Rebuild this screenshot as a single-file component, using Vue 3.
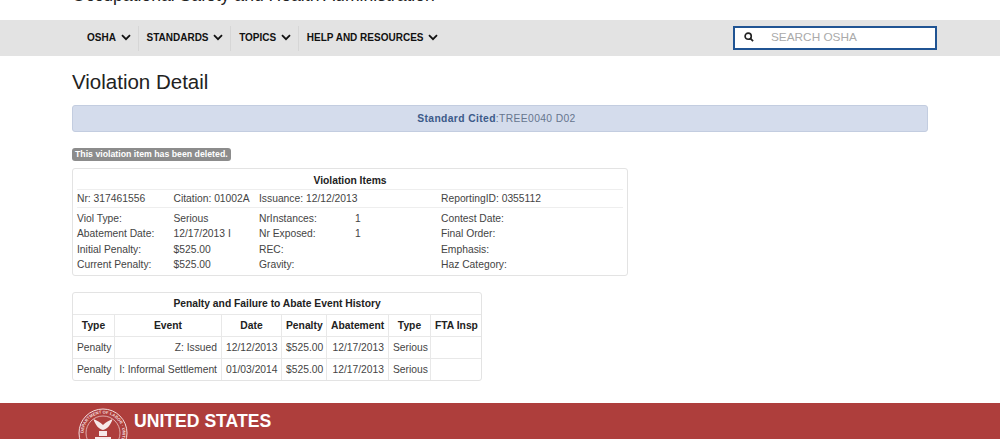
<script setup>
const navItems = ['OSHA', 'STANDARDS', 'TOPICS', 'HELP AND RESOURCES']
const rows = [
  ['Viol Type:', 'Serious', 'NrInstances:', '1', 'Contest Date:'],
  ['Abatement Date:', '12/17/2013 I', 'Nr Exposed:', '1', 'Final Order:'],
  ['Initial Penalty:', '$525.00', 'REC:', '', 'Emphasis:'],
  ['Current Penalty:', '$525.00', 'Gravity:', '', 'Haz Category:'],
]
const history = [
  ['Penalty', 'Z: Issued', '12/12/2013', '$525.00', '12/17/2013', 'Serious', ''],
  ['Penalty', 'I: Informal Settlement', '01/03/2014', '$525.00', '12/17/2013', 'Serious', ''],
]
const colClasses = ['c1', 'c2', 'c3', 'c4', 'c5', 'c6', 'c7']
</script>

<template>
  <div class="page">
    <div class="agency"><span>Occupational Safety and Health Administration</span></div>
    <nav class="nav">
      <ul class="menu">
        <li v-for="item in navItems" :key="item" class="menu-item">
          {{ item }}
          <svg class="chev" width="10" height="7" viewBox="0 0 10 7"><path d="M1 1.2 5 5.200l4-4" fill="none" stroke="#111" stroke-width="1.8"/></svg>
        </li>
      </ul>
      <div class="search">
        <svg class="glass" width="10" height="10" viewBox="0 0 11 11"><circle cx="4.6" cy="4.6" r="3.4" fill="none" stroke="#222" stroke-width="1.8"/><path d="M7.2 7.2 10 10" stroke="#222" stroke-width="2"/></svg>
        <span class="placeholder">SEARCH OSHA</span>
      </div>
    </nav>
    <main class="main">
      <h1 class="title">Violation Detail</h1>
      <div class="cited"><b>Standard Cited</b>:TREE0040 D02</div>
      <span class="label">This violation item has been deleted.</span>
      <section class="items">
        <div class="items-head">Violation Items</div>
        <div class="grid top">
          <span>Nr: 317461556</span><span>Citation: 01002A</span><span class="wide">Issuance: 12/12/2013</span><span>ReportingID: 0355112</span>
        </div>
        <div class="grid body">
          <template v-for="(row, i) in rows" :key="i">
            <span v-for="(cell, j) in row" :key="j">{{ cell }}</span>
          </template>
        </div>
      </section>
      <table class="history">
        <colgroup><col v-for="c in colClasses" :key="c" :class="c"></colgroup>
        <thead>
          <tr class="caption-row"><th colspan="7">Penalty and Failure to Abate Event History</th></tr>
          <tr><th>Type</th><th>Event</th><th>Date</th><th>Penalty</th><th>Abatement</th><th>Type</th><th>FTA Insp</th></tr>
        </thead>
        <tbody>
          <tr v-for="(row, i) in history" :key="i">
            <td v-for="(cell, j) in row" :key="j" :class="{ right: j === 1 || j === 4 }">{{ cell }}</td>
          </tr>
        </tbody>
      </table>
    </main>
    <footer class="footer">
      <svg class="seal" width="50" height="50" viewBox="0 0 50 50">
        <defs><path id="ring" d="M5.5 25a19.5 19.5 0 1 1 39 0a19.5 19.5 0 1 1 -39 0"/></defs>
        <circle cx="25" cy="25" r="24" fill="none" stroke="#f3dddd" stroke-width="1"/>
        <circle cx="25" cy="25" r="17" fill="none" stroke="#f3dddd" stroke-width=".7"/>
        <text class="ring-text" fill="#f3dddd"><textPath href="#ring">DEPARTMENT OF LABOR · UNITED STATES OF AMERICA</textPath></text>
        <path d="M25 22C21 21 17 17 15.5 11C19 12.5 22 14 25 17C28 14 31 12.5 34.500 11C33 17 29 21 25 22Z" fill="#f6e8e8"/>
        <path d="M21 23h8v5h-8z" fill="#f6e8e8"/>
        <path d="M17 29h16v3H17zM20 33h10v3H20z" fill="#f6e8e8"/>
      </svg>
      <span class="country">UNITED STATES</span>
    </footer>
  </div>
</template>

<style scoped>
.page {
  width: 1000px;
  height: 439px;
  overflow: hidden;
  font-family: "Liberation Sans", Arial, sans-serif;
  color: #444;
  font-size: 10.3px;
  background: #fff;
}
.agency {
  height: 20px;
  padding-left: 72px;
  font-size: 17.6px;
  color: #222;
  line-height: 20px;
  overflow: hidden;
}
.agency span { display: block; margin-top: -15px; }
.nav {
  height: 36px;
  background: #e3e3e3;
  display: flex;
  justify-content: space-between;
  align-items: center;
  padding: 0 63px 0 79px;
}
.menu { display: flex; list-style: none; margin: 0; padding: 0; }
.menu-item {
  display: flex;
  align-items: center;
  gap: 4.6px;
  height: 25px;
  box-sizing: border-box;
  padding: 0 7px 2px 8px;
  font-size: 10px;
  font-weight: 700;
  color: #111;
  border-right: 1px solid #d6d6d6;
}
.chev { margin-top: 1px; }
.menu-item:last-child { border-right: 0; }
.search {
  width: 204px;
  height: 24px;
  box-sizing: border-box;
  border: 2px solid #205493;
  background: #fff;
  display: flex;
  align-items: center;
  padding: 0 0 2px 9px;
  gap: 17px;
}
.placeholder { font-size: 11.8px; color: #aaa; }
.main { padding: 0 72px; }
.title {
  margin: 13px 0 0;
  font-size: 20.5px;
  line-height: 26px;
  font-weight: 400;
  color: #222;
}
.cited {
  margin-top: 10px;
  height: 27px;
  box-sizing: border-box;
  width: 856px;
  padding-right: 7px;
  background: #d4dcec;
  border: 1px solid #c3cde0;
  border-radius: 3px;
  text-align: center;
  line-height: 25px;
  color: #66758e;
  font-size: 10.3px;
  letter-spacing: .38px;
}
.cited b { color: #3c5a8a; }
.label {
  display: block;
  width: max-content;
  margin-top: 16px;
  background: #8c8c8c;
  color: #fff;
  font-size: 8.75px;
  font-weight: 700;
  line-height: 13px;
  padding: 0 3px;
  border-radius: 3px;
}
.items {
  margin-top: 7px;
  width: 556px;
  height: 108px;
  box-sizing: border-box;
  border: 1px solid #e3e3e3;
  border-radius: 3px;
  padding: 0 4px;
}
.items-head {
  height: 20px;
  line-height: 24px;
  text-align: center;
  font-weight: 700;
  color: #222;
  border-bottom: 1px solid #eee;
}
.grid {
  display: grid;
  grid-template-columns: 96.5px 85.5px 96px 86px 1fr;
  white-space: nowrap;
}
.wide { grid-column: span 2; }
.top { height: 17px; line-height: 17px; border-bottom: 1px solid #eee; }
.body { margin-top: 3px; grid-auto-rows: 15.4px; line-height: 15.4px; }
.history {
  margin-top: 16px;
  width: 410px;
  table-layout: fixed;
  border-collapse: separate;
  border-spacing: 0;
  border: 1px solid #e3e3e3;
  border-radius: 3px;
  font-size: 10.3px;
}
.c1 { width: 41px; }
.c2 { width: 107px; }
.c3 { width: 60px; }
.c4 { width: 45px; }
.c5 { width: 62px; }
.c6 { width: 42px; }
.c7 { width: 51px; }
.history th, .history td {
  height: 22px;
  box-sizing: border-box;
  padding: 0 4px;
  border-left: 1px solid #e8e8e8;
  border-top: 1px solid #e8e8e8;
  white-space: nowrap;
  text-align: center;
}
.history .caption-row th { height: 21px; }
.history th { color: #222; }
.history td { color: #444; }
.history th:first-child, .history td:first-child { border-left: 0; }
.history thead tr:first-child th { border-top: 0; }
.history td.right { text-align: right; }
.footer {
  margin-top: 22px;
  height: 60px;
  background: #ae3e3c;
  display: flex;
  align-items: flex-start;
  padding-left: 78px;
  gap: 6px;
}
.seal { margin-top: 5px; flex: none; }
.ring-text { font: 700 4.2px "Liberation Sans", Arial, sans-serif; }
.country {
  color: #fff;
  font-weight: 700;
  font-size: 17.6px;
  line-height: 20px;
  margin-top: 8px;
}
</style>
